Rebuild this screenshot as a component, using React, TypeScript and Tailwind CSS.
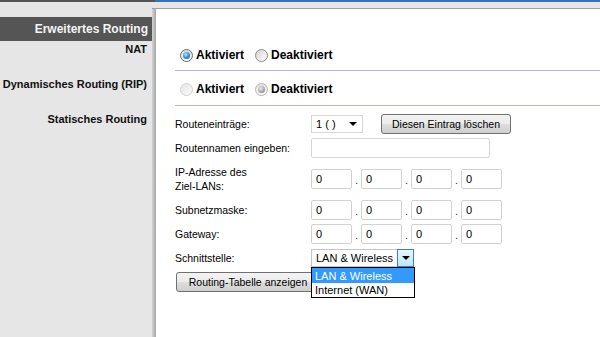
import React from "react";

type RadioKind = "on" | "off" | "disabledOff" | "disabledOn";

const Radio: React.FC<{ kind: RadioKind }> = ({ kind }) => {
  if (kind === "on") {
    return (
      <span className="flex w-[13px] h-[13px] rounded-full border border-[#6e6e6e] bg-[linear-gradient(#d6d6d6,#fbfbfb)] items-center justify-center shrink-0">
        <span className="block w-[7px] h-[7px] rounded-full bg-[radial-gradient(circle_at_40%_35%,#bfe6ff_0%,#3d9ee0_45%,#0f4d82_100%)]" />
      </span>
    );
  }
  if (kind === "off") {
    return <span className="block w-[13px] h-[13px] rounded-full border border-[#8c8c8c] bg-[linear-gradient(135deg,#d2d2d2,#ffffff)] shrink-0" />;
  }
  if (kind === "disabledOff") {
    return <span className="block w-[13px] h-[13px] rounded-full border border-[#cfcfcf] bg-[linear-gradient(135deg,#e6e6e6,#fafafa)] shrink-0" />;
  }
  return (
    <span className="flex w-[13px] h-[13px] rounded-full border border-[#b4b4b4] bg-[linear-gradient(#e2e2e2,#fafafa)] items-center justify-center shrink-0">
      <span className="block w-[7px] h-[7px] rounded-full bg-[radial-gradient(circle_at_40%_35%,#eeeeee_0%,#a8a8a8_55%,#7a7a7a_100%)]" />
    </span>
  );
};

const IpInput: React.FC = () => (
  <div className="w-[41px] h-[20px] border border-[#d2d2d2] rounded-[2px] bg-white flex items-center pl-[4px] text-[11px] text-black">
    0
  </div>
);

const Dot: React.FC = () => (
  <span className="w-[9px] text-center text-[11px] text-[#333] self-end pb-[3px] leading-none">.</span>
);

const IpRow: React.FC = () => (
  <div className="flex items-center">
    <IpInput />
    <Dot />
    <IpInput />
    <Dot />
    <IpInput />
    <Dot />
    <IpInput />
  </div>
);

const Arrow: React.FC = () => (
  <span className="w-0 h-0 border-l-[4px] border-r-[4px] border-t-[4px] border-l-transparent border-r-transparent border-t-black" />
);

const RadioPair: React.FC<{ first: RadioKind; second: RadioKind }> = ({ first, second }) => (
  <div className="flex items-center ml-[5px]">
    <Radio kind={first} />
    <span className="ml-[3px]">Aktiviert</span>
    <span className="ml-[11px] flex">
      <Radio kind={second} />
    </span>
    <span className="ml-[3px]">Deaktiviert</span>
  </div>
);

const App: React.FC = () => {
  return (
    <div className="w-[600px] h-[337px] overflow-hidden bg-[#e6e6e6] font-['Liberation_Sans',Arial,sans-serif] flex flex-col">
      {/* Top strip */}
      <div className="flex h-[2px] shrink-0">
        <div className="w-[155px] bg-[#555555]" />
        <div className="flex-1 bg-[#3572ba]" />
      </div>

      <div className="flex flex-1 min-h-0">
        {/* Sidebar */}
        <div className="w-[152px] shrink-0 pt-[15px] flex flex-col text-[11px] font-bold text-[#111] text-right leading-[14px]">
          <div className="h-[24px] bg-[#555555] text-[#f4f4f4] text-[12px] flex items-center justify-end pr-[4px]">
            Erweitertes Routing
          </div>
          <div className="mt-[1px] pr-[5px]">NAT</div>
          <div className="mt-[21px] pr-[5px] whitespace-nowrap">Dynamisches Routing (RIP)</div>
          <div className="mt-[21px] pr-[5px]">Statisches Routing</div>
        </div>

        {/* Content panel */}
        <div className="flex-1 mt-[6px] flex flex-col">
          <div className="h-[1px] bg-[#a0a0a0]" />
          <div className="flex flex-1">
            <div className="w-[4px] bg-[linear-gradient(to_right,#d4d4d4,#a6a6a6)]" />
            <div className="flex-1 bg-white pl-[19px] pt-[31px] flex flex-col text-black">
              {/* NAT */}
              <div className="h-[31px] flex items-center border-b border-[#b6b6e4] text-[12px] font-bold">
                <RadioPair first="on" second="off" />
              </div>
              {/* RIP */}
              <div className="h-[35px] pt-[2px] flex items-center border-b border-[#b6b6e4] text-[12px] font-bold">
                <RadioPair first="disabledOff" second="disabledOn" />
              </div>

              {/* Statisches Routing */}
              <div className="flex flex-col text-[10.5px] leading-[14px]">
                <div className="mt-[8px] h-[20px] flex items-center">
                  <span className="w-[136px]">Routeneinträge:</span>
                  <div className="w-[52px] h-[18px] border border-[#d6d6d6] flex items-center justify-between pl-[4px] pr-[5px] text-[11px]">
                    <span>1 ( )</span>
                    <Arrow />
                  </div>
                  <button className="ml-[18px] w-[130px] h-[20px] rounded-[3px] border border-[#707070] bg-[linear-gradient(#f3f3f3,#ebebeb_50%,#dddddd_51%,#cfcfcf)] text-[10.5px] text-black flex items-center justify-center">
                    Diesen Eintrag löschen
                  </button>
                </div>

                <div className="mt-[4px] h-[20px] flex items-center">
                  <span className="w-[136px] whitespace-nowrap">Routennamen eingeben:</span>
                  <div className="w-[179px] h-[20px] border border-[#d6d6d6] rounded-[2px]" />
                </div>

                <div className="mt-[7px] h-[28px] flex items-center">
                  <span className="w-[136px]">
                    IP-Adresse des
                    <br />
                    Ziel-LANs:
                  </span>
                  <IpRow />
                </div>

                <div className="mt-[7px] h-[20px] flex items-center">
                  <span className="w-[136px]">Subnetzmaske:</span>
                  <IpRow />
                </div>

                <div className="mt-[4px] h-[20px] flex items-center">
                  <span className="w-[136px]">Gateway:</span>
                  <IpRow />
                </div>

                <div className="mt-[5px] h-[18px] flex items-center relative">
                  <span className="w-[136px]">Schnittstelle:</span>
                  <div className="w-[102px] h-[18px] border border-[#c4c4c4] border-r-0 flex items-center text-[11px]">
                    <span className="flex-1 pl-[4px]">LAN &amp; Wireless</span>
                    <span className="w-[17px] h-[18px] -mr-[1px] border border-[#3c7fb1] bg-[linear-gradient(#eaf6fd,#bee6fd)] flex items-center justify-center">
                      <Arrow />
                    </span>
                  </div>
                  {/* open list */}
                  <div className="absolute left-[136px] top-[18px] w-[104px] border border-black bg-white text-[11px] z-10">
                    <div className="h-[15px] bg-[#3399ff] text-white pl-[3px] flex items-center">LAN &amp; Wireless</div>
                    <div className="h-[14px] pl-[3px] flex items-center">Internet (WAN)</div>
                  </div>
                </div>

                <div className="mt-[5px] h-[20px] flex items-center">
                  <button className="ml-[1px] w-[144px] h-[20px] rounded-[3px] border border-[#707070] bg-[linear-gradient(#f3f3f3,#ebebeb_50%,#dddddd_51%,#cfcfcf)] text-[10.5px] text-black flex items-center justify-center">
                    Routing-Tabelle anzeigen
                  </button>
                </div>
              </div>
            </div>
          </div>
        </div>
      </div>
    </div>
  );
};

export default App;
